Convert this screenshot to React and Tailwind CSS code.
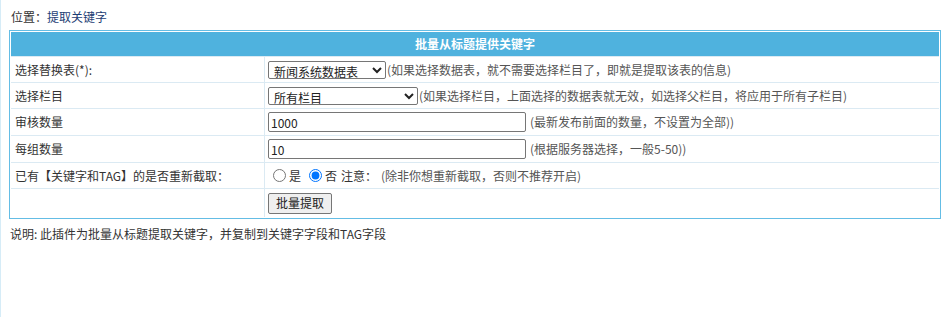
import React, { useState } from "react";

const rows = [
  { label: "选择替换表(*):", kind: "table" },
  { label: "选择栏目", kind: "class" },
  { label: "审核数量", kind: "num", value: "1000", tip: "(最新发布前面的数量，不设置为全部))" },
  { label: "每组数量", kind: "num", value: "10", tip: "(根据服务器选择，一般5-50))" },
  { label: "已有【关键字和TAG】的是否重新截取：", kind: "radio" },
  { label: "", kind: "submit" },
];

export default function App() {
  const [redo, setRedo] = useState("0");

  const renderValue = (r) => {
    if (r.kind === "table") {
      return (
        <div className="flex items-center">
          <select className="h-[18px] w-[118px] border border-[#767676] rounded-[2px] bg-white text-[12px] font-normal pl-[1px] text-[#222]">
            <option>新闻系统数据表</option>
          </select>
          <span className="ml-[1px] text-[#555]">(如果选择数据表，就不需要选择栏目了，即就是提取该表的信息)</span>
        </div>
      );
    }
    if (r.kind === "class") {
      return (
        <div className="flex items-center">
          <select className="h-[18px] w-[150px] border border-[#767676] rounded-[2px] bg-white text-[12px] font-normal pl-[1px] text-[#222]">
            <option>所有栏目</option>
          </select>
          <span className="ml-[1px] text-[#555]">(如果选择栏目，上面选择的数据表就无效，如选择父栏目，将应用于所有子栏目)</span>
        </div>
      );
    }
    if (r.kind === "num") {
      return (
        <div className="flex items-center">
          <input
            defaultValue={r.value}
            className="h-[20px] w-[258px] border border-[#767676] rounded-[2px] bg-white px-[2px] text-[12px] text-[#222] outline-none"
          />
          <span className="ml-[4px] text-[#555]">{r.tip}</span>
        </div>
      );
    }
    if (r.kind === "radio") {
      return (
        <div className="flex items-center text-[#333]">
          <label className="flex items-center">
            <input type="radio" name="redo" className="m-0 ml-[5px] mr-[3px] w-[13px] h-[13px]" checked={redo === "1"} onChange={() => setRedo("1")} />
            是
          </label>
          <label className="flex items-center">
            <input type="radio" name="redo" className="m-0 ml-[8px] mr-[3px] w-[13px] h-[13px]" checked={redo === "0"} onChange={() => setRedo("0")} />
            否
          </label>
          <span className="ml-[4px]">注意：</span>
          <span className="ml-[4px] text-[#555]">(除非你想重新截取，否则不推荐开启)</span>
        </div>
      );
    }
    return (
      <button className="h-[21px] w-[64px] border border-[#767676] rounded-[2px] bg-[#efefef] text-[12px] text-[#222]">
        批量提取
      </button>
    );
  };

  return (
    <div
      className="min-h-[317px] bg-white border-l border-[#d6ecf7] text-[12px] text-[#333]"
      style={{ fontFamily: '"Microsoft YaHei", "Noto Sans CJK SC", "Noto Sans", sans-serif' }}
    >
      <div className="pl-[10px] pt-[9px] h-[30px] leading-[16px]">
        位置：<span className="text-[#1d3d74]">提取关键字</span>
      </div>

      <div className="ml-[8px] w-[932px] border border-[#64bde5] p-[1px]">
        <div className="h-[25px] bg-[#4fb2de] text-white font-bold flex items-center justify-center border-b border-[#dbeaf3]">
          批量从标题提供关键字
        </div>
        {rows.map((r, i) => (
          <div
            key={i}
            className={`grid grid-cols-[254px_1fr] ${i < rows.length - 1 ? "border-b border-[#dbeaf3]" : ""} ${
              r.kind === "num" ? "h-[27px]" : r.kind === "submit" ? "h-[28px]" : "h-[26px]"
            }`}
          >
            <div className="flex items-center pl-[4px] border-r border-[#dbeaf3]">{r.label}</div>
            <div className="flex items-center pl-[3px]">{renderValue(r)}</div>
          </div>
        ))}
      </div>

      <div className="pl-[9px] pt-[7px] leading-[16px]">
        说明: 此插件为批量从标题提取关键字，并复制到关键字字段和TAG字段
      </div>
    </div>
  );
}
